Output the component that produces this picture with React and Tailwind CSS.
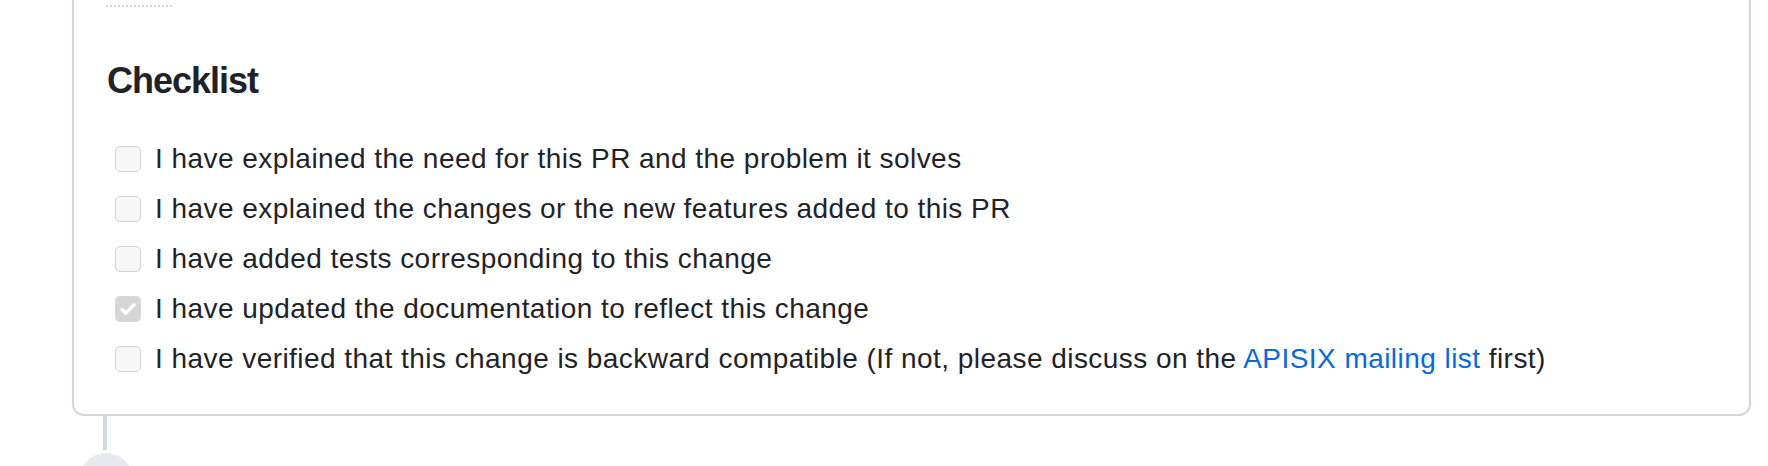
const items = [
  { text: "I have explained the need for this PR and the problem it solves", checked: false },
  { text: "I have explained the changes or the new features added to this PR", checked: false },
  { text: "I have added tests corresponding to this change", checked: false },
  { text: "I have updated the documentation to reflect this change", checked: true },
];

function Box({ checked }) {
  if (checked) {
    return (
      <span className="flex h-[26px] w-[26px] shrink-0 items-center justify-center rounded-[5px] bg-[#d6d6d6]">
        <svg width="20" height="20" viewBox="0 0 16 16" fill="none">
          <path d="M3.2 8.4l3 3L12.8 4.6" stroke="#ffffff" strokeWidth="2.6" strokeLinecap="round" strokeLinejoin="round" />
        </svg>
      </span>
    );
  }
  return <span className="h-[26px] w-[26px] shrink-0 rounded-[5px] border-[1.5px] border-[#d2d2d2] bg-[#f7f7f7]" />;
}

export default function App() {
  return (
    <div className="h-[466px] w-full overflow-hidden bg-white text-[#1f2328]" style={{ fontFamily: '"Liberation Sans", Arial, sans-serif' }}>
      <div className="ml-[72px] w-[1679px] rounded-b-[12px] border-2 border-t-0 border-[#d0d7de] pb-[34px] pl-[33px] pt-[5px]">
        <div className="ml-[-1px] h-[2px] w-[66px] border-t-2 border-dotted border-[#d0d7de]" />
        <h3 className="mt-[51px] text-[36px] font-semibold leading-[45px] tracking-[-1px]">Checklist</h3>
        <ul className="mt-[34px] flex flex-col gap-[7px] tracking-[0.45px]">
          {items.map((it) => (
            <li key={it.text} className="flex items-center gap-[14px] pl-[8px] text-[28px] leading-[43px]">
              <Box checked={it.checked} />
              <span>{it.text}</span>
            </li>
          ))}
          <li className="flex items-center gap-[14px] pl-[8px] text-[28px] leading-[43px]">
            <Box checked={false} />
            <span>
              I have verified that this change is backward compatible (If not, please discuss on the{" "}
              <a href="#" className="text-[#0969da]">APISIX mailing list</a> first)
            </span>
          </li>
        </ul>
      </div>
      <div className="ml-[103px] h-[34px] w-[4px] bg-[#d0d7de]" />
      <div className="ml-[79px] mt-[3px] h-[54px] w-[54px] rounded-full bg-[#e6eaef]" />
    </div>
  );
}
